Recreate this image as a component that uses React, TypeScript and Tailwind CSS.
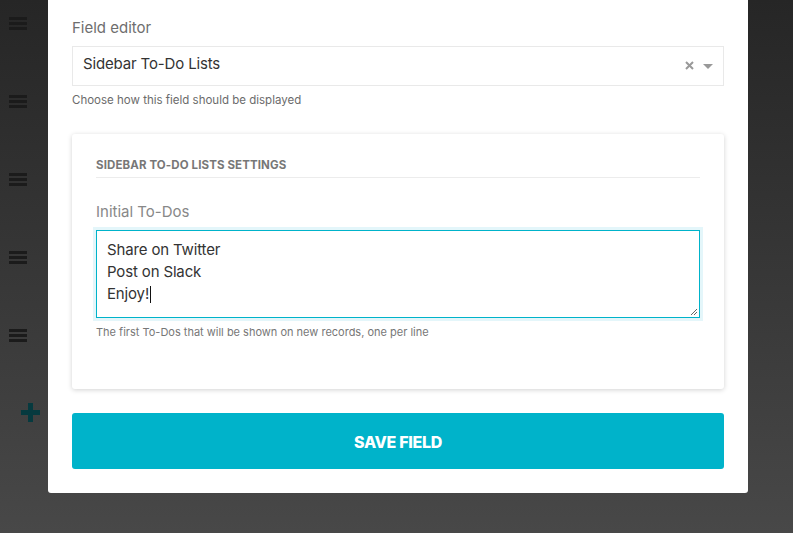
import React from "react"

const font = { fontFamily: "Inter, 'Noto Sans', sans-serif" }

function Burger() {
  return (
    <div className="flex w-[18px] flex-col gap-[2px]">
      <div className="h-[3px] bg-[#1b1b1b]" />
      <div className="h-[3px] bg-[#1b1b1b]" />
      <div className="h-[3px] bg-[#1b1b1b]" />
    </div>
  )
}

function BackgroundList() {
  return (
    <div className="flex w-[48px] flex-col gap-[12px] -mt-[9px]">
      {[0, 1, 2, 3, 4].map((i) => (
        <div
          key={i}
          className="flex h-[66px] w-[60px] items-center rounded-[3px] border-r border-[#ffffff0a] pl-[9px] pb-[2px]"
        >
          <Burger />
        </div>
      ))}
      <div className="mt-[22px] pl-[21px]">
        <svg width="19" height="19" viewBox="0 0 19 19">
          <rect x="7" y="0" width="5" height="19" fill="#063a3f" />
          <rect x="0" y="7" width="19" height="5" fill="#063a3f" />
        </svg>
      </div>
    </div>
  )
}

export default function App() {
  return (
    <div
      className="relative flex h-[533px] w-[793px] overflow-hidden bg-gradient-to-b from-[#262626] to-[#484848]"
      style={font}
    >
      <BackgroundList />

      {/* modal */}
      <div className="absolute left-[48px] top-0 w-[700px] rounded-b-[3px] bg-white px-[24px] pb-[24px] pt-[16px]">
        <div className="text-[15px] leading-[24px] text-[#6e6e6e]">Field editor</div>
        <div className="mt-[6px] flex h-[40px] items-center border border-[#e9e9e9] pb-[3px] pl-[10px] pr-[10px]">
          <span className="flex-1 text-[15px] tracking-[-0.01em] text-[#333]">Sidebar To-Do Lists</span>
          <svg className="mr-[9px] mt-[2px]" width="9" height="9" viewBox="0 0 9 9">
            <path d="M1 1L8 8M8 1L1 8" stroke="#999" strokeWidth="2" />
          </svg>
          <svg className="mt-[3px]" width="10" height="5" viewBox="0 0 10 5">
            <path d="M0 0h10L5 5z" fill="#999" />
          </svg>
        </div>
        <div className="mt-[7px] text-[11.5px] leading-[14px] text-[#6b6b6b]">
          Choose how this field should be displayed
        </div>

        <div className="mt-[27px] rounded-[3px] bg-white px-[24px] pb-[50px] pt-[24px] shadow-[0_1px_5px_rgba(0,0,0,0.18)]">
          <div className="border-b border-[#ececec] pb-[5px] text-[11.5px] font-bold uppercase leading-[14px] tracking-[0.01em] text-[#777]">
            Sidebar To-Do Lists Settings
          </div>
          <div className="mt-[24px] text-[15px] leading-[20px] text-[#888]">Initial To-Dos</div>
          <div className="relative mt-[8px] h-[88px] border border-[#00b3ca] px-[10px] pt-[8px] text-[15px] leading-[22px] tracking-[-0.01em] text-[#333] shadow-[0_0_0_3px_#e4f6fa]">
            <div>Share on Twitter</div>
            <div>Post on Slack</div>
            <div className="flex items-center">
              Enjoy!
              <span className="ml-[1px] inline-block h-[17px] w-[1px] bg-[#111]" />
            </div>
            <svg className="absolute bottom-[1px] right-[1px]" width="8" height="8" viewBox="0 0 8 8">
              <path d="M1 7L7 1M4 7L7 4" stroke="#666" strokeWidth="1" />
            </svg>
          </div>
          <div className="mt-[7px] text-[11px] leading-[14px] text-[#777]">
            The first To-Dos that will be shown on new records, one per line
          </div>
        </div>

        <button className="mt-[24px] flex h-[56px] w-full items-center justify-center rounded-[3px] bg-[#00b3ca] pt-[2px] text-[16px] font-extrabold tracking-[-0.02em] text-white">
          SAVE FIELD
        </button>
      </div>
    </div>
  )
}
